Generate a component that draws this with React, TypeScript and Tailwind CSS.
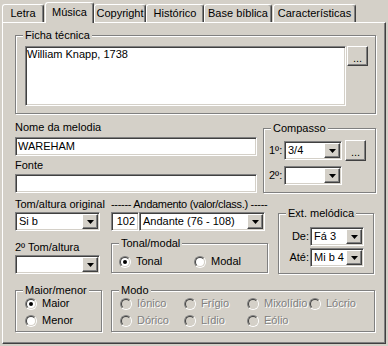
import React from "react";

const sunken =
  "border border-t-[#808080] border-l-[#808080] border-b-white border-r-white shadow-[inset_1px_1px_0_#404040,inset_-1px_-1px_0_#d4d0c8] bg-white";
const raised =
  "border border-t-white border-l-white border-b-[#404040] border-r-[#404040] shadow-[inset_-1px_-1px_0_#808080] bg-[#d4d0c8]";
const etched =
  "relative border border-[#808080] shadow-[inset_1px_1px_0_#fff,1px_1px_0_#fff]";
const disabledText = "text-[#808080] [text-shadow:1px_1px_0_#fff]";

function Arrow() {
  return (
    <svg width="7" height="4" viewBox="0 0 7 4">
      <path d="M0 0h7L3.5 4z" fill="#000" />
    </svg>
  );
}

function Combo({ value, className }: { value?: string; className: string }) {
  return (
    <div className={`${sunken} ${className} flex p-[1px]`}>
      <div className="flex-1 pl-[2px] leading-[15px] whitespace-nowrap overflow-hidden">{value}</div>
      <div className={`${raised} w-[16px] flex items-center justify-center`}>
        <Arrow />
      </div>
    </div>
  );
}

function Dots({ className }: { className: string }) {
  return (
    <div className={`${raised} ${className} flex items-center justify-center pt-[3px] leading-[10px]`}>...</div>
  );
}

function Group({ label, className, children }: { label: string; className: string; children?: React.ReactNode }) {
  return (
    <div className={`${etched} ${className}`}>
      <span className="absolute -top-[7px] left-[7px] bg-[#d4d0c8] px-[2px] leading-[13px] whitespace-nowrap">{label}</span>
      {children}
    </div>
  );
}

function Radio({ label, checked, disabled }: { label: string; checked?: boolean; disabled?: boolean }) {
  return (
    <div className="flex items-center gap-[5px] h-[13px] whitespace-nowrap">
      <div className="w-[12px] h-[12px] rounded-full border border-t-[#808080] border-l-[#808080] border-b-white border-r-white">
        <div
          className={`w-[10px] h-[10px] rounded-full border border-t-[#404040] border-l-[#404040] border-b-[#d4d0c8] border-r-[#d4d0c8] flex items-center justify-center ${
            disabled ? "bg-[#d4d0c8]" : "bg-white"
          }`}
        >
          {checked && <div className="w-[4px] h-[4px] rounded-full bg-black" />}
        </div>
      </div>
      <span className={disabled ? disabledText : ""}>{label}</span>
    </div>
  );
}

function Tab({ label, className, active }: { label: string; className: string; active?: boolean }) {
  return (
    <div
      className={`${className} flex items-center justify-center rounded-t-[3px] border-t border-l border-r border-t-white border-l-white border-r-[#404040] shadow-[inset_-1px_0_0_#808080] bg-[#d4d0c8] whitespace-nowrap ${
        active ? "relative z-10 h-[21px] -mb-[1px] pb-[1px]" : "h-[18px]"
      }`}
    >
      {label}
    </div>
  );
}

export default function App() {
  return (
    <div className="w-[388px] h-[346px] bg-[#d4d0c8] font-['Liberation_Sans',Arial,sans-serif] text-[11px] leading-[13px] text-black overflow-hidden">
      <div className="flex items-end h-[22px] pl-[2px]">
        <Tab label="Letra" className="w-[42px]" />
        <Tab label="Música" className="w-[49px] ml-[1px]" active />
        <Tab label="Copyright" className="w-[52px]" />
        <Tab label="Histórico" className="w-[58px]" />
        <Tab label="Base bíblica" className="w-[68px]" />
        <Tab label="Características" className="w-[83px] ml-[1px]" />
      </div>

      <div className="ml-[2px] w-[384px] h-[322px] border border-t-white border-l-white border-r-[#404040] border-b-[#404040] shadow-[inset_-1px_-1px_0_#808080] pl-[12px] pt-[12px]">
        <Group label="Ficha técnica" className="w-[361px] h-[79px]">
          <div className="flex pl-[9px] pt-[10px]">
            <div className={`${sunken} w-[321px] h-[60px] pl-[1px] pt-[1px]`}>William Knapp, 1738</div>
            <Dots className="ml-[1px] w-[21px] h-[20px]" />
          </div>
        </Group>

        <div className="flex">
          <div className="w-[242px]">
            <div className="mt-[7px] h-[13px]">Nome da melodia</div>
            <div className={`${sunken} mt-[3px] h-[19px] pl-[2px] leading-[17px]`}>WAREHAM</div>
            <div className="mt-[3px] h-[13px]">Fonte</div>
            <div className={`${sunken} mt-[2px] h-[19px]`} />
          </div>
          <Group label="Compasso" className="ml-[6px] mt-[14px] w-[113px] h-[65px]">
            <div className="pl-[5px] pt-[11px]">
              <div className="flex items-center h-[21px]">
                <span className="w-[15px]">1º:</span>
                <Combo value="3/4" className="w-[58px] h-[19px]" />
                <Dots className="ml-[3px] w-[21px] h-[21px]" />
              </div>
              <div className="flex items-center h-[19px] mt-[5px]">
                <span className="w-[15px]">2º:</span>
                <Combo className="w-[58px] h-[19px]" />
              </div>
            </div>
          </Group>
        </div>

        <div className="flex mt-[5px]">
          <div className="w-[85px]">
            <div className="h-[13px] whitespace-nowrap">Tom/altura original</div>
            <Combo value="Si b" className="mt-[1px] w-[85px] h-[19px]" />
            <div className="mt-[10px] h-[13px] whitespace-nowrap">2º Tom/altura</div>
            <Combo className="mt-[1px] w-[85px] h-[19px]" />
          </div>
          <div className="ml-[10px] w-[158px]">
            <div className="h-[13px] whitespace-nowrap pl-[1px] tracking-[-0.3px]">------ Andamento (valor/class.) -----</div>
            <div className="flex mt-[1px] ml-[1px]">
              <div className={`${sunken} w-[28px] h-[19px] text-right pr-[3px] leading-[17px]`}>102</div>
              <Combo value="Andante (76 - 108)" className="w-[126px] h-[19px]" />
            </div>
            <Group label="Tonal/modal" className="ml-[1px] mt-[12px] w-[157px] h-[30px]">
              <div className="flex pl-[7px] pt-[11px]">
                <div className="w-[75px]">
                  <Radio label="Tonal" checked />
                </div>
                <Radio label="Modal" />
              </div>
            </Group>
          </div>
          <Group label="Ext. melódica" className="ml-[10px] mt-[15px] w-[96px] h-[61px]">
            <div className="pt-[13px]">
              <div className="flex items-center h-[19px]">
                <span className="w-[31px] text-right pr-[1px]">De:</span>
                <Combo value="Fá 3" className="w-[54px] h-[19px]" />
              </div>
              <div className="flex items-center h-[19px] mt-[2px]">
                <span className="w-[31px] text-right pr-[1px]">Até:</span>
                <Combo value="Mi b 4" className="w-[54px] h-[19px]" />
              </div>
            </div>
          </Group>
        </div>

        <div className="flex mt-[16px]">
          <Group label="Maior/menor" className="w-[87px] h-[42px]">
            <div className="flex flex-col gap-[4px] pl-[9px] pt-[6px]">
              <Radio label="Maior" checked />
              <Radio label="Menor" />
            </div>
          </Group>
          <Group label="Modo" className="ml-[9px] w-[264px] h-[42px]">
            <div className="grid grid-cols-[64px_63px_62px_1fr] gap-y-[4px] pl-[8px] pt-[6px]">
              <Radio label="Iônico" disabled />
              <Radio label="Frígio" disabled />
              <Radio label="Mixolídio" disabled />
              <Radio label="Lócrio" disabled />
              <Radio label="Dórico" disabled />
              <Radio label="Lídio" disabled />
              <Radio label="Eólio" disabled />
            </div>
          </Group>
        </div>
      </div>
    </div>
  );
}
